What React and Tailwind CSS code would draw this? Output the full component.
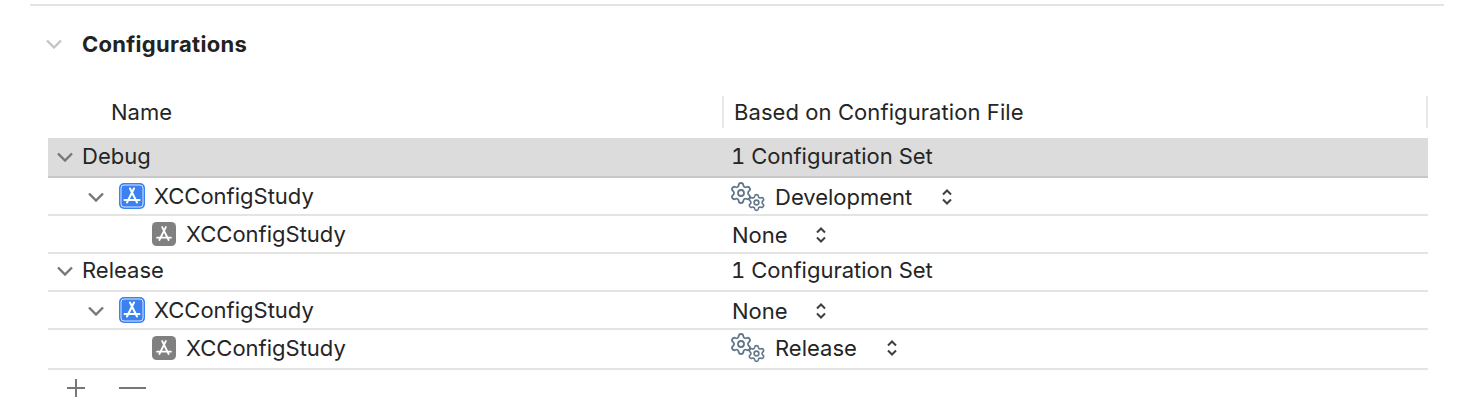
import React from 'react';
import { Settings } from 'lucide-react';

const Chevron = ({ className = '' }) => (
  <svg width="16" height="10" viewBox="0 0 16 10" fill="none" className={className}>
    <path d="M1 1.5 L8 8.5 L15 1.5" stroke="currentColor" strokeWidth="2.4" />
  </svg>
);

const UpDown = () => (
  <svg width="10" height="16" viewBox="0 0 10 16" fill="none" className="text-[#3f3f3f]">
    <path d="M1 5.5 L5 1.5 L9 5.5 M1 10.5 L5 14.5 L9 10.5" stroke="currentColor" strokeWidth="2" />
  </svg>
);

const AppIcon = ({ blue }) => (
  <svg width={blue ? 26 : 24} height={blue ? 26 : 24} viewBox="0 0 26 26" fill="none">
    <rect width="26" height="26" rx="5" fill={blue ? '#3b82f0' : '#808080'} />
    {blue && <rect x="2" y="2" width="22" height="22" rx="3" stroke="#ffffff" strokeWidth="0.8" />}
    <path d="M11 5.5 L18 19.5 M15 5.5 L8 19.5 M5.5 17 H20.5" stroke="#ffffff" strokeWidth="2" strokeLinecap="round" />
  </svg>
);

const Gears = () => (
  <span className="relative block w-[36px] h-[30px] text-[#62768a] shrink-0">
    <Settings size={24} strokeWidth={1.8} className="absolute left-[-1px] top-[-1px]" />
    <Settings size={19} strokeWidth={2} className="absolute left-[17px] top-[11px]" />
  </span>
);

function Row({ height, band, left, right, leftClass = '', rightClass = '' }) {
  return (
    <div
      className={
        'flex items-center border-b-2 ' +
        (band ? 'bg-[#dcdcdc] border-[#c8c8c8] ' : 'border-[#e4e4e4] ') +
        height
      }
    >
      <div className={'w-[674px] flex items-center shrink-0 ' + leftClass}>{left}</div>
      <div className={'flex items-center ' + rightClass}>{right}</div>
    </div>
  );
}

const Group = ({ label }) => (
  <>
    <Chevron className="ml-[9px] mr-[9px] text-[#777777] mt-[2px]" />
    <span>{label}</span>
  </>
);

const Target = () => (
  <>
    <Chevron className="ml-[40px] mr-[15px] text-[#777777] mt-[2px]" />
    <AppIcon blue />
    <span className="ml-[9px]">XCConfigStudy</span>
  </>
);

const Child = () => (
  <>
    <span className="ml-[104px]"><AppIcon /></span>
    <span className="ml-[10px]">XCConfigStudy</span>
  </>
);

const Count = () => <span className="ml-[9px] tabular-nums">1 Configuration Set</span>;

const NonePop = () => (
  <span className="ml-[10px] flex items-center gap-[28px]">
    <span>None</span>
    <UpDown />
  </span>
);

const FilePop = ({ name }) => (
  <span className="ml-[8px] flex items-center">
    <Gears />
    <span className="ml-[9px]">{name}</span>
    <span className="ml-[30px]"><UpDown /></span>
  </span>
);

export default function App() {
  return (
    <div className="w-[1478px] h-[414px] bg-white overflow-hidden text-[#252525] text-[22px] font-['Inter',sans-serif] flex flex-col">
      <div className="ml-[30px] mr-[34px] mt-[4px] h-[2px] bg-[#e4e4e4]" />

      <div className="flex items-center h-[76px] ml-[46px]">
        <Chevron className="text-[#c4c4c4] mr-[20px]" />
        <span className="font-bold tracking-[0.3px] text-[#222222]">Configurations</span>
      </div>

      <div className="ml-[48px] mr-[50px]">
        <div className="flex items-center h-[32px] mt-[14px] mb-[10px]">
          <div className="w-[674px] h-full flex items-center pl-[63px] shrink-0">Name</div>
          <div className="flex-1 h-full flex items-center border-l-2 border-r-2 border-[#e8e8e8] pl-[10px] tracking-[0.08px]">
            Based on Configuration File
          </div>
        </div>

        <Row band height="h-[40px]" leftClass="mb-[2px]" rightClass="mb-[2px]" left={<Group label="Debug" />} right={<Count />} />
        <Row height="h-[38px]" rightClass="mt-[2px]" left={<Target />} right={<FilePop name="Development" />} />
        <Row height="h-[38px]" rightClass="mt-[2px]" left={<Child />} right={<NonePop />} />
        <Row height="h-[38px]" leftClass="mb-[4px]" rightClass="mb-[4px]" left={<Group label="Release" />} right={<Count />} />
        <Row height="h-[38px]" rightClass="mt-[2px]" left={<Target />} right={<NonePop />} />
        <Row height="h-[40px]" leftClass="mb-[2px]" rightClass="mb-[2px]" left={<Child />} right={<FilePop name="Release" />} />

        <div className="flex items-center h-[36px] text-[#777777]">
          <svg width="18" height="18" viewBox="0 0 18 18" className="ml-[19px]">
            <path d="M9 0 V18 M0 9 H18" stroke="currentColor" strokeWidth="2" />
          </svg>
          <span className="ml-[34px] block w-[27px] h-[2px] bg-[#777777]" />
        </div>
      </div>
    </div>
  );
}
